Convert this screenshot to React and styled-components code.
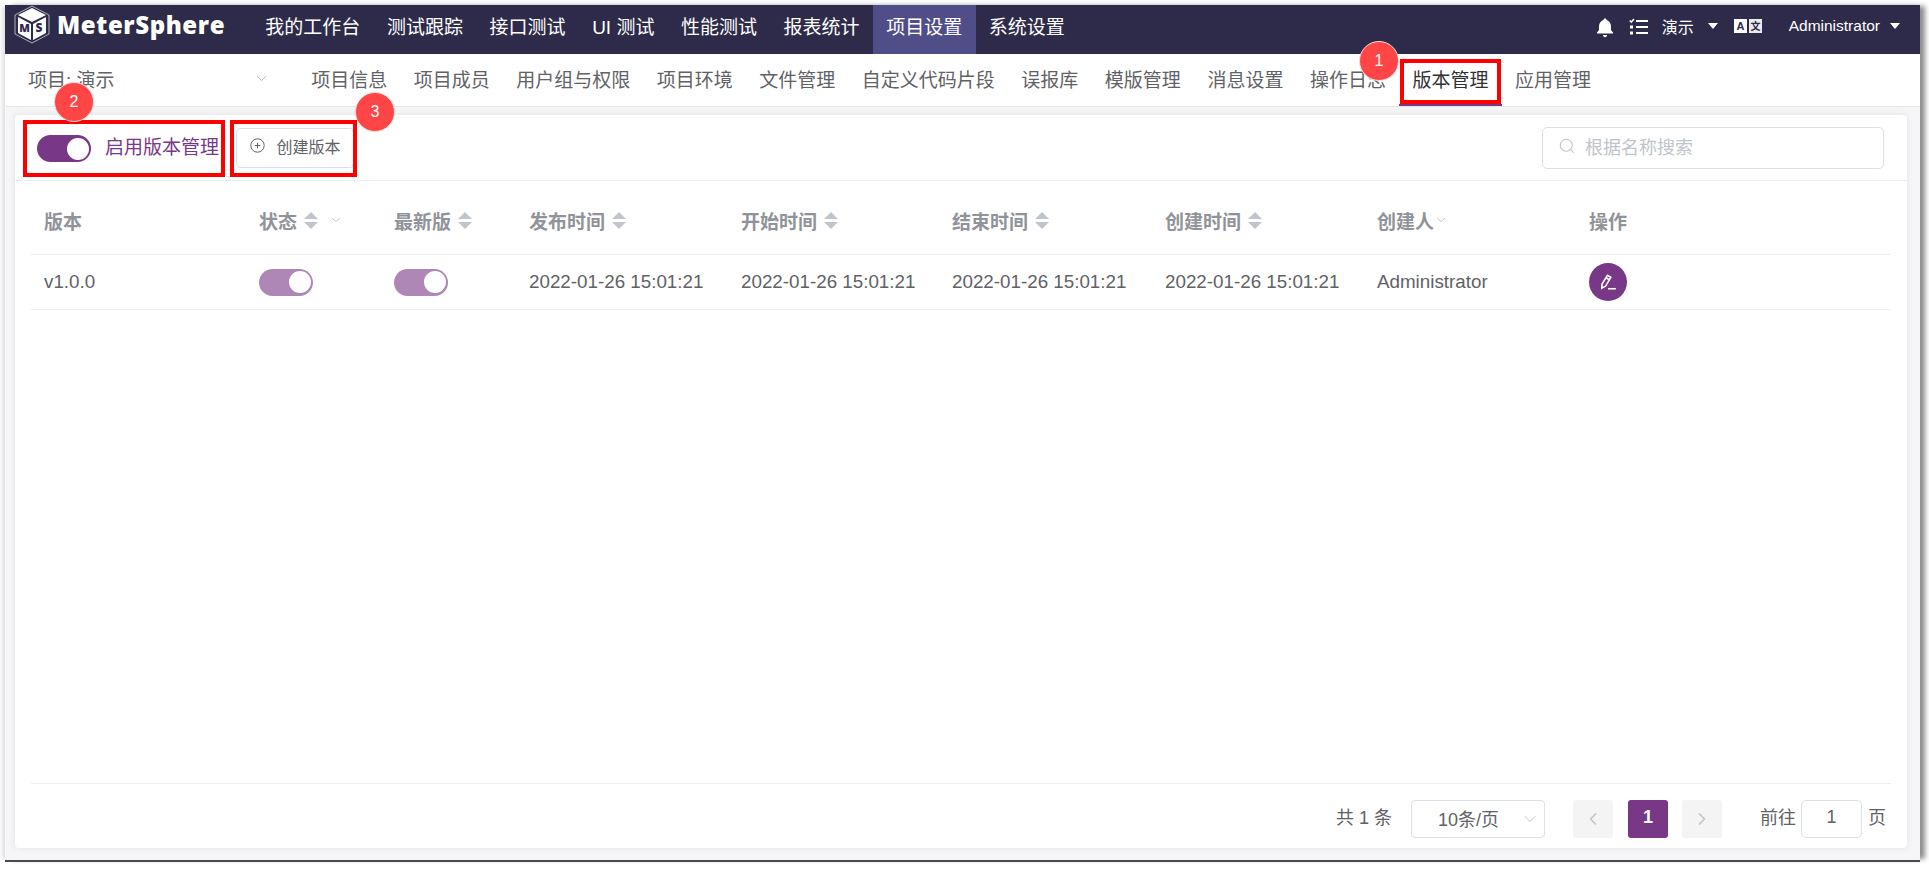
import React from "react";
import styled, { createGlobalStyle } from "styled-components";
import { ChevronDown, ChevronLeft, ChevronRight, Search } from "lucide-react";

const Global = createGlobalStyle`
  html, body { margin: 0; padding: 0; background: #fff; }
  body { font-family: "Liberation Sans", "Noto Sans CJK SC", sans-serif; overflow: hidden; }
  * { box-sizing: border-box; }
`;

const Screen = styled.div`
  width: 1929px; height: 869px; padding: 5px 9px 9px 5px; background: #fff;
`;
const Frame = styled.div`
  position: relative; width: 1915px; height: 855px; display: flex; flex-direction: column;
  background: #f6f6f8;
  box-shadow: 0 2px 0 #4a4a4a, 6px 0 5px -1px rgba(0,0,0,.45), -4px 0 4px -1px rgba(0,0,0,.12);
`;
const Header = styled.header`
  height: 49px; flex: none; display: flex; align-items: center; background: #2e2b4a; color: #fff;
`;
const LogoWrap = styled.div`
  width: 247px; flex: none; height: 100%; display: flex; align-items: center; padding: 0 0 10px 9px; gap: 7px;
`;
const LogoText = styled.span`
  font: 800 24px "Open Sans", sans-serif; letter-spacing: .6px; color: #fff; line-height: 1;
`;
const TopItem = styled.div`
  height: 49px; display: flex; align-items: center; padding: 0 13.3px 8px; font-size: 19px; color: #fff; white-space: nowrap;
  background: ${p => (p.$active ? "#4f4e88" : "transparent")};
`;
const TopRight = styled.div`
  margin-left: auto; display: flex; align-items: center; height: 100%; padding: 0 20px 8px 0;
`;
const TopLabel = styled.span`
  font-size: ${p => p.$size || 16}px; color: #fff; margin: ${p => p.$m || 0}; white-space: nowrap;
`;
const Caret = styled.i`
  display: block; width: 0; height: 0; border-left: 5.5px solid transparent; border-right: 5.5px solid transparent;
  border-top: 6px solid #fff; margin: ${p => p.$m || 0};
`;
const IconSlot = styled.span`
  display: inline-flex; margin: ${p => p.$m || 0};
`;
const Sub = styled.nav`
  height: 53px; flex: none; display: flex; align-items: center; background: #fff; border-bottom: 1px solid #e6e6e6;
`;
const ProjectSelect = styled.div`
  width: 293px; flex: none; display: flex; align-items: center; padding: 0 0 3px 23px; color: #606266; font-size: 19px; height: 100%;
  svg { margin-left: 138px; color: #a8abb2; }
`;
const SubItem = styled.div`
  height: 100%; display: flex; align-items: center; padding: 0 13.25px 2px; font-size: 19px; white-space: nowrap;
  color: ${p => (p.$active ? "#303133" : "#606266")};
  border-bottom: 2px solid ${p => (p.$active ? "#783887" : "transparent")};
`;
const Card = styled.main`
  margin: 8px 13px 12px 10px; flex: 1; display: flex; flex-direction: column; background: #fff; border-radius: 4px;
  box-shadow: 0 0 6px rgba(120,120,150,.16);
`;
const Toolbar = styled.div`
  height: 66px; flex: none; display: flex; align-items: center; padding: 0 23px 0 22px; border-bottom: 1px solid #eaecf2;
`;
const Toggle = styled.span`
  position: relative; display: inline-block; width: 54px; height: 27px; border-radius: 14px; flex: none;
  margin-top: ${p => p.$mt || 0}px;
  background: ${p => (p.$faded ? "#af87b7" : "#783887")};
  &::after {
    content: ""; position: absolute; right: 2.5px; top: 2.5px; width: 22px; height: 22px; border-radius: 50%; background: #fff;
  }
`;
const ToggleLabel = styled.span`
  margin-left: 14px; padding-bottom: 4px; font-size: 19px; color: #783887; white-space: nowrap;
`;
const CreateBtn = styled.button`
  margin-left: 17px; width: 118px; height: 40px; display: flex; align-items: center; justify-content: center; gap: 12px;
  background: #fff; border: 1px solid #dcdfe6; border-radius: 4px; color: #606266; font: 16px "Liberation Sans", "Noto Sans CJK SC", sans-serif; padding: 0 0 4px;
`;
const SearchBox = styled.div`
  margin-left: auto; width: 342px; height: 42px; display: flex; align-items: center; gap: 9px; padding: 0 0 3px 15px;
  border: 1px solid #dcdfe6; border-radius: 5px; color: #c0c4cc; font-size: 18px;
`;
const Table = styled.div`
  margin: 0 16px; flex: 1; display: flex; flex-direction: column;
`;
const Row = styled.div`
  display: grid; grid-template-columns: 215px 135px 135px 212px 211px 213px 212px 212px 1fr;
  height: ${p => p.$h}px; align-items: center; border-bottom: 1px solid #ebeef5;
`;
const HeadCell = styled.div`
  padding: 5px 0 0 13px; display: flex; align-items: center; font-size: 19px; font-weight: 700; color: #909399; white-space: nowrap;
`;
const Cell = styled.div`
  padding-left: 13px; font-size: 18.8px; color: #606266; white-space: nowrap; display: flex; align-items: center;
`;
const Sort = styled.span`
  margin-left: 7px; display: inline-flex; flex-direction: column; gap: 3px;
  &::before, &::after { content: ""; width: 0; height: 0; border-left: 7.5px solid transparent; border-right: 7.5px solid transparent; }
  &::before { border-bottom: 7px solid #c0c4cc; }
  &::after { border-top: 7px solid #c0c4cc; }
`;
const FilterIcon = styled.span`
  margin-left: ${p => p.$m}px; display: inline-flex; color: #a8abb2;
`;
const EditBtn = styled.span`
  width: 38px; height: 38px; border-radius: 50%; background: #783887; display: inline-flex; align-items: center; justify-content: center;
`;
const Footer = styled.footer`
  margin: 0 16px; height: 65px; flex: none; display: flex; align-items: center; justify-content: flex-end; border-top: 1px solid #ebeef5;
  padding: 6px 5px 0 0; color: #606266; font-size: 18px;
`;
const FootText = styled.span`
  padding-bottom: 6px; margin-left: ${p => p.$m || 0}px;
`;
const PageSize = styled.div`
  margin-left: 19px; width: 134px; height: 38px; border: 1px solid #dcdfe6; border-radius: 4px; display: flex; align-items: center;
  padding: 0 4px 3px 26px; justify-content: space-between;
  svg { color: #c0c4cc; margin-top: 3px; }
`;
const PageBtn = styled.div`
  width: 40px; height: 38px; margin-left: ${p => p.$m}px; border-radius: 3px; display: flex; align-items: center; justify-content: center;
  background: ${p => (p.$active ? "#783887" : "#f4f4f5")}; color: ${p => (p.$active ? "#fff" : "#c0c4cc")}; font-weight: 700; font-size: 18px;
  padding-bottom: ${p => (p.$active ? 3 : 0)}px;
`;
const GotoInput = styled.div`
  margin: 0 6px 0 5px; width: 61px; height: 38px; border: 1px solid #dcdfe6; border-radius: 5px; display: flex; align-items: center; justify-content: center;
  padding-bottom: 3px;
`;
const RedBox = styled.div`
  position: absolute; left: ${p => p.$x}px; top: ${p => p.$y}px; width: ${p => p.$w}px; height: ${p => p.$h}px;
  border: 4px solid #f00; pointer-events: none;
`;
const Badge = styled.div`
  position: absolute; left: ${p => p.$x - 20}px; top: ${p => p.$y - 20}px; width: 40px; height: 40px; border-radius: 50%;
  background: #ff4545; border: 1px solid #fbdcdc; color: #fff; font-size: 16px; display: flex; align-items: center; justify-content: center;
`;

const Logo = () => (
  <svg width="36" height="39" viewBox="0 0 36 39">
    <polygon points="18,1 35,10 35,29 18,38 1,29 1,10" fill="none" stroke="#cfcfdc" strokeWidth=".8" />
    <polygon points="18,3 32,10 18,17 4,10" fill="#fff" />
    <polygon points="4,12 17,19 17,35 4,28" fill="#fff" />
    <polygon points="32,12 19,19 19,35 32,28" fill="#fff" />
    <text x="10.5" y="27" textAnchor="middle" fontSize="11" fontWeight="900" fontFamily="Open Sans" fill="#2e2b4a">M</text>
    <text x="25" y="27" textAnchor="middle" fontSize="12" fontWeight="900" fontFamily="Open Sans" fill="#2e2b4a">S</text>
  </svg>
);
const BellIcon = () => (
  <svg width="18" height="20" viewBox="0 0 18 20">
    <path d="M9 0.5c1 0 1.6.7 1.6 1.6C13.400 3 15 5.400 15 8.500v3.500l2 2.500v1H1v-1l2-2.500V8.500C3 5.400 4.600 3 7.400 2.100 7.400 1.200 8 .5 9 .5z" fill="#fff" />
    <path d="M6.800 17h4.400c-.2 1.300-1.100 2.200-2.200 2.200S7 18.300 6.800 17z" fill="#fff" />
  </svg>
);
const TaskIcon = () => (
  <svg width="19" height="18" viewBox="0 0 19 18" fill="none" stroke="#fff">
    <path d="M7 3h12M7 9h12M7 15h12" strokeWidth="2.200" />
    <path d="M.8 2.500l1.500 1.600L5 1" strokeWidth="1.500" />
    <rect x="1" y="7.500" width="3" height="3" fill="#fff" stroke="none" />
    <rect x="1" y="13.500" width="3" height="3" fill="#fff" stroke="none" />
  </svg>
);
const LangIcon = () => (
  <svg width="28" height="14" viewBox="0 0 28 14">
    <rect x="0" y="0" width="13" height="14" fill="#fff" />
    <rect x="15" y="0" width="13" height="14" fill="#e9e9ee" />
    <text x="6.500" y="11" textAnchor="middle" fontSize="11" fontWeight="700" fontFamily="Liberation Sans" fill="#2e2b4a">A</text>
    <text x="21.500" y="11" textAnchor="middle" fontSize="10" fontWeight="700" fontFamily="Noto Sans CJK SC" fill="#2e2b4a">文</text>
  </svg>
);
const PlusCircle = () => (
  <svg width="15" height="15" viewBox="0 0 15 15" fill="none" stroke="#606266" strokeWidth="1">
    <circle cx="7.500" cy="7.500" r="6.700" />
    <path d="M7.500 4.700v5.600M4.700 7.500h5.600" />
  </svg>
);
const Pencil = () => (
  <svg width="18" height="18" viewBox="0 0 16 16" fill="none" stroke="#fff" strokeWidth="1.400">
    <path d="M2.500 13.500l.2-3.700L7.500 2l3 1.800-4.700 8z" />
    <path d="M6.300 4.200l2.900 1.900" />
    <path d="M8 14h7" />
  </svg>
);

const top = ["我的工作台", "测试跟踪", "接口测试", "UI 测试", "性能测试", "报表统计", "项目设置", "系统设置"];
const sub = ["项目信息", "项目成员", "用户组与权限", "项目环境", "文件管理", "自定义代码片段", "误报库", "模版管理", "消息设置", "操作日志", "版本管理", "应用管理"];
const times = ["发布时间", "开始时间", "结束时间", "创建时间"];
const date = "2022-01-26 15:01:21";

export default function App() {
  return (
    <Screen>
      <Global />
      <Frame>
        <Header>
          <LogoWrap><Logo /><LogoText>MeterSphere</LogoText></LogoWrap>
          {top.map(t => <TopItem key={t} $active={t === "项目设置"}>{t}</TopItem>)}
          <TopRight>
            <IconSlot $m="4px 15px 0 0"><BellIcon /></IconSlot>
            <IconSlot $m="2px 0 0 0"><TaskIcon /></IconSlot>
            <TopLabel $m="0 14px 0 14px">演示</TopLabel>
            <Caret />
            <IconSlot $m="0 0 0 16px"><LangIcon /></IconSlot>
            <TopLabel $size={15.5} $m="0 10px 0 27px">Administrator</TopLabel>
            <Caret />
          </TopRight>
        </Header>
        <Sub>
          <ProjectSelect>项目: 演示<ChevronDown size={17} strokeWidth={1.2} /></ProjectSelect>
          {sub.map(t => <SubItem key={t} $active={t === "版本管理"}>{t}</SubItem>)}
        </Sub>
        <Card>
          <Toolbar>
            <Toggle $mt={2} />
            <ToggleLabel>启用版本管理</ToggleLabel>
            <CreateBtn><PlusCircle />创建版本</CreateBtn>
            <SearchBox><Search size={18} strokeWidth={1.4} />根据名称搜索</SearchBox>
          </Toolbar>
          <Table>
            <Row $h={74}>
              <HeadCell>版本</HeadCell>
              <HeadCell>状态<Sort /><FilterIcon $m={11}><ChevronDown size={14} strokeWidth={1.2} /></FilterIcon></HeadCell>
              <HeadCell>最新版<Sort /></HeadCell>
              {times.map(t => <HeadCell key={t}>{t}<Sort /></HeadCell>)}
              <HeadCell>创建人<FilterIcon $m={0}><ChevronDown size={14} strokeWidth={1.2} /></FilterIcon></HeadCell>
              <HeadCell>操作</HeadCell>
            </Row>
            <Row $h={55}>
              <Cell>v1.0.0</Cell>
              <Cell><Toggle $faded /></Cell>
              <Cell><Toggle $faded /></Cell>
              {times.map(t => <Cell key={t}>{date}</Cell>)}
              <Cell>Administrator</Cell>
              <Cell><EditBtn><Pencil /></EditBtn></Cell>
            </Row>
          </Table>
          <Footer>
            <FootText>共 1 条</FootText>
            <PageSize>10条/页<ChevronDown size={20} strokeWidth={1.2} /></PageSize>
            <PageBtn $m={28}><ChevronLeft size={20} strokeWidth={2} /></PageBtn>
            <PageBtn $m={15} $active>1</PageBtn>
            <PageBtn $m={14}><ChevronRight size={20} strokeWidth={2} /></PageBtn>
            <FootText $m={38}>前往</FootText>
            <GotoInput>1</GotoInput>
            <FootText>页</FootText>
          </Footer>
        </Card>
        <RedBox $x={1395} $y={54} $w={101} $h={45} />
        <RedBox $x={18} $y={115} $w={202} $h={57} />
        <RedBox $x={225} $y={115} $w={127} $h={57} />
        <Badge $x={1374} $y={56}>1</Badge>
        <Badge $x={69} $y={97}>2</Badge>
        <Badge $x={370} $y={107}>3</Badge>
      </Frame>
    </Screen>
  );
}
